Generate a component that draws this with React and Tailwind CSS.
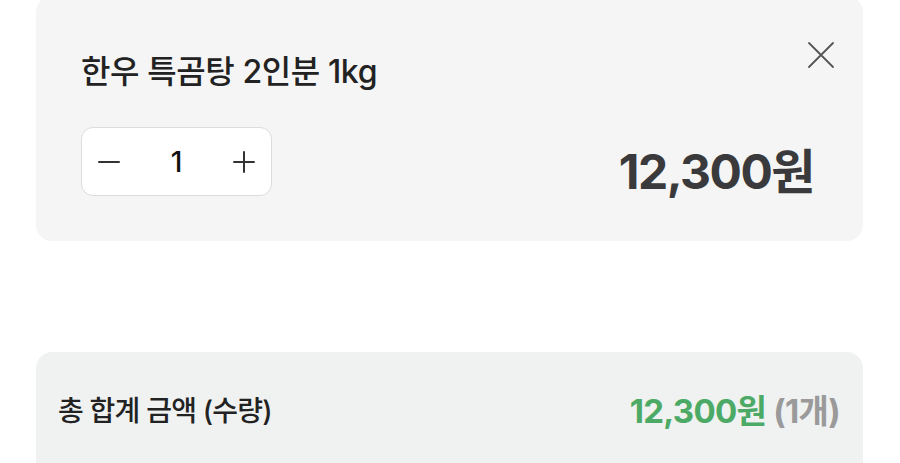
import React, { useState } from 'react';

const font = { fontFamily: 'Inter, "Noto Sans CJK KR", sans-serif' };

const CartItem = ({ name, price, qty, onMinus, onPlus }) => (
    <div className="relative -mt-[4px] h-[245px] rounded-2xl bg-[#f5f5f5] pl-[45px] pr-[49px] pt-[56px]">
        {/* bouton supprimer */}
        <button className="absolute right-[27px] top-[44px] text-[#555]">
            <svg width="30" height="30" viewBox="0 0 30 30" fill="none" stroke="currentColor" strokeWidth="1.8" strokeLinecap="round">
                <path d="M3 3 L27 27 M27 3 L3 27" />
            </svg>
        </button>

        <h2 className="text-[32px] font-medium leading-[40px] text-[#222] tracking-[-0.4px]">{name}</h2>

        <div className="mt-[35px] flex items-center justify-between">
            <div className="flex h-[69px] w-[191px] items-center justify-between rounded-xl border border-[#dcdcdc] bg-white px-[16px]">
                <button onClick={onMinus} className="text-[#333]">
                    <svg width="22" height="22" viewBox="0 0 22 22" stroke="currentColor" strokeWidth="2" strokeLinecap="round">
                        <path d="M1 11 H21" />
                    </svg>
                </button>
                <span className="text-[28px] font-medium text-[#111]">{qty}</span>
                <button onClick={onPlus} className="text-[#333]">
                    <svg width="22" height="22" viewBox="0 0 22 22" stroke="currentColor" strokeWidth="2" strokeLinecap="round">
                        <path d="M1 11 H21 M11 1 V21" />
                    </svg>
                </button>
            </div>
            <span className="mt-[20px] text-[48px] font-bold leading-none tracking-[-1.5px] text-[#3a3a3c]">{price}</span>
        </div>
    </div>
);

export default function App() {
    const [qty, setQty] = useState(1);
    const unit = 12300;
    const total = (unit * qty).toLocaleString('ko-KR');

    return (
        <div className="h-[463px] overflow-hidden bg-white px-[36px] pr-[37px]" style={font}>
            <CartItem
                name="한우 특곰탕 2인분 1kg"
                price={`${total}원`}
                qty={qty}
                onMinus={() => setQty(q => Math.max(1, q - 1))}
                onPlus={() => setQty(q => q + 1)}
            />

            {/* total */}
            <div className="mt-[111px] flex h-[130px] items-start justify-between rounded-2xl bg-[#f0f2f2] px-[22px] pr-[23px] pt-[40px]">
                <span className="text-[28px] font-medium leading-[38px] text-[#222] tracking-[-0.8px]">총 합계 금액 (수량)</span>
                <span className="text-[33px] font-bold leading-[38px] tracking-[-0.7px]">
                    <span className="text-[#4caa66]">{total}원</span>{' '}
                    <span className="text-[#9a9a9a]">({qty}개)</span>
                </span>
            </div>
        </div>
    );
}
